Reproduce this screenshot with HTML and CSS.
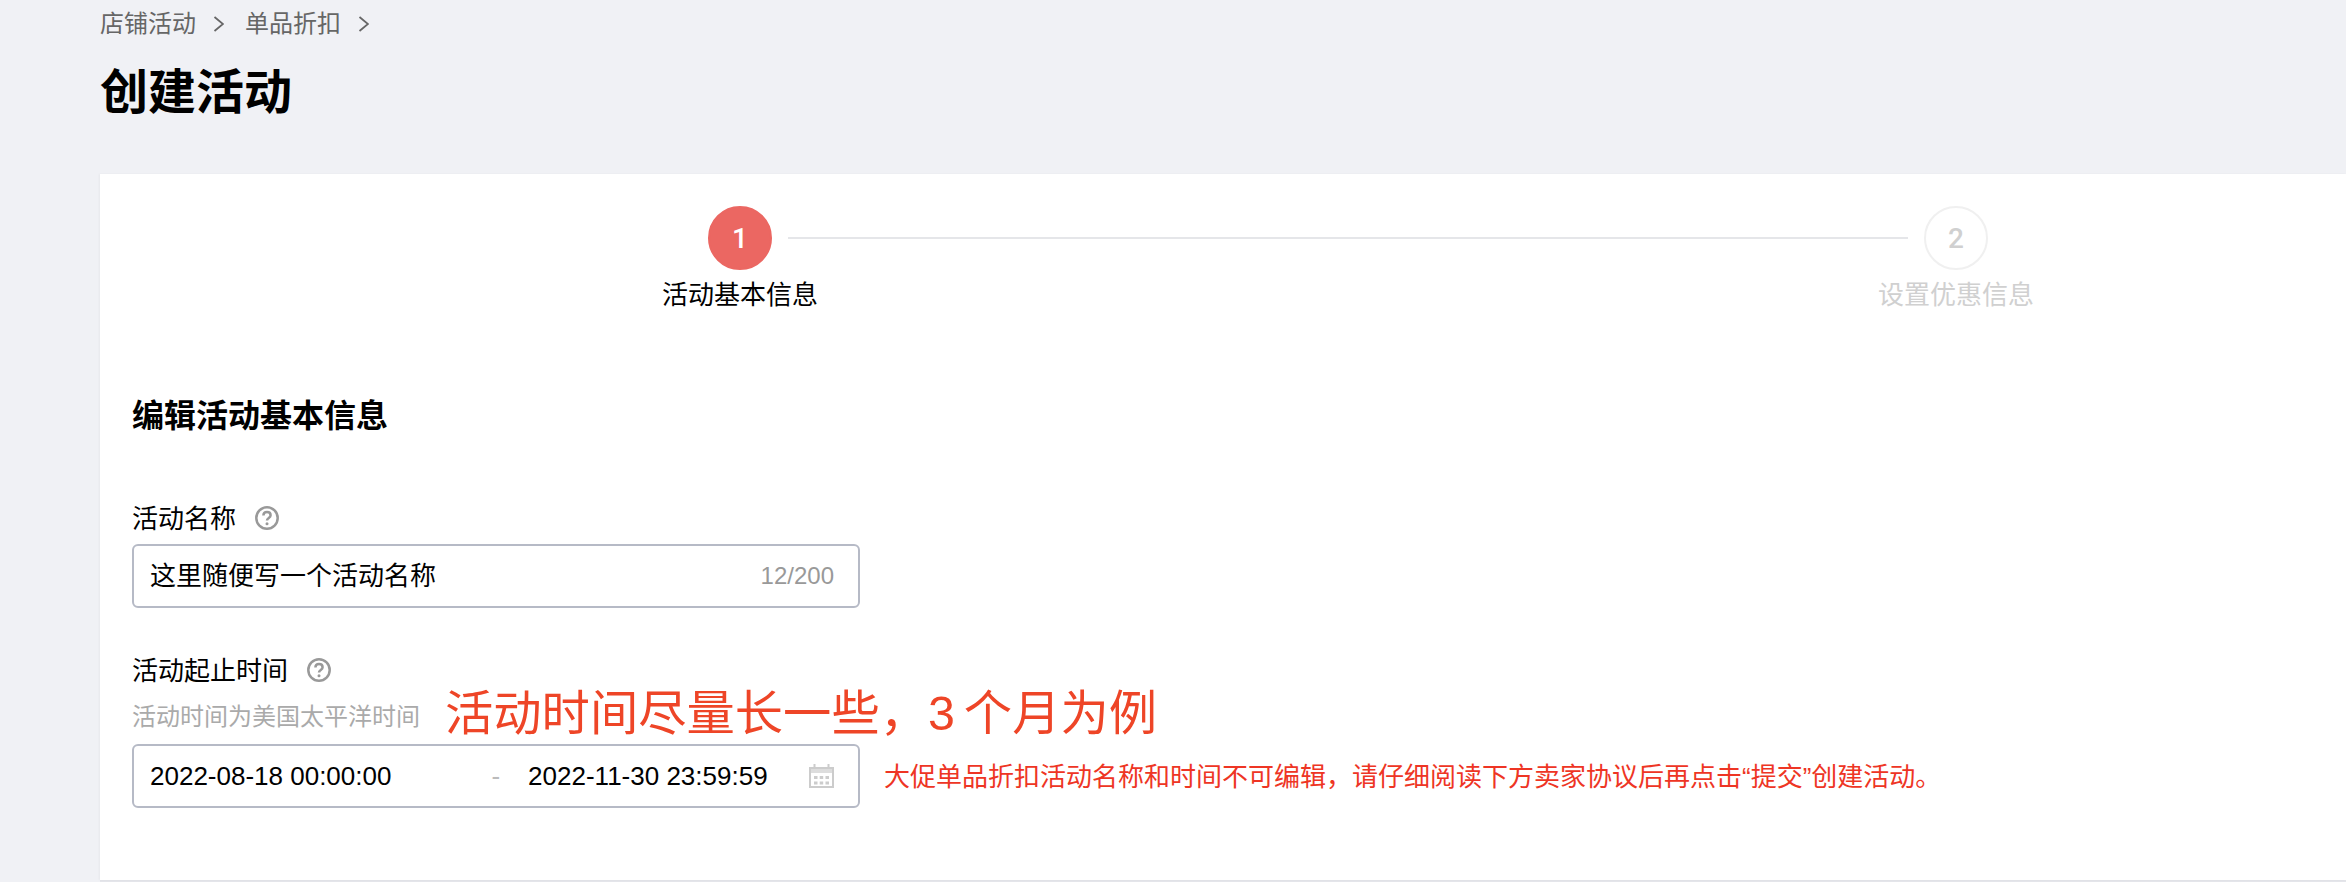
FILE: index.html
```html
<!DOCTYPE html>
<html lang="zh-CN">

<head>
  <meta charset="UTF-8" />
  <title>创建活动</title>
  <link rel="stylesheet" href="styles.css">
</head>

<body>
  <div class="page-head">
    <div class="breadcrumb">
      <span>店铺活动</span>
      <svg class="crumb-arrow" viewBox="0 0 11 16"><path d="M1.500 1 10 8l-8.500 7" /></svg>
      <span>单品折扣</span>
      <svg class="crumb-arrow" viewBox="0 0 11 16"><path d="M1.500 1 10 8l-8.500 7" /></svg>
    </div>
    <h1>创建活动</h1>
  </div>

  <div class="card">
    <div class="steps">
      <div class="step active">
        <div class="step-num">1</div>
        <div class="step-label">活动基本信息</div>
      </div>
      <div class="step-line"></div>
      <div class="step">
        <div class="step-num">2</div>
        <div class="step-label">设置优惠信息</div>
      </div>
    </div>

    <h2>编辑活动基本信息</h2>

    <div class="field-label first">
      <span>活动名称</span>
      <svg class="help" viewBox="0 0 24 24">
        <circle cx="12" cy="12" r="10.700" />
        <path d="M8.400 9.600c0-2.200 1.600-3.500 3.600-3.500s3.600 1.300 3.600 3.200c0 2.700-3.600 2.600-3.600 5.200" />
        <circle class="dot" cx="12" cy="17.800" r="1.500" />
      </svg>
    </div>
    <div class="input">
      <span class="input-text">这里随便写一个活动名称</span>
      <span class="count">12/200</span>
    </div>

    <div class="field-label second">
      <span>活动起止时间</span>
      <svg class="help" viewBox="0 0 24 24">
        <circle cx="12" cy="12" r="10.700" />
        <path d="M8.400 9.600c0-2.200 1.600-3.500 3.600-3.500s3.600 1.300 3.600 3.200c0 2.700-3.600 2.600-3.600 5.200" />
        <circle class="dot" cx="12" cy="17.800" r="1.500" />
      </svg>
    </div>
    <div class="hint-row">
      <span class="hint">活动时间为美国太平洋时间</span>
      <span class="big-note">活动时间尽量长一些，<span class="big-num">3</span>个月为例</span>
    </div>
    <div class="date-row">
      <div class="input">
        <span>2022-08-18 00:00:00</span>
        <span class="dash">-</span>
        <span>2022-11-30 23:59:59</span>
        <svg class="calendar" viewBox="0 0 25 24">
          <path class="cal-head" d="M1 4h23v5H1z" />
          <path class="cal-frame" d="M1 4h23v19H1z" />
          <path class="cal-tabs" d="M5.500 0v4M19.500 0v4" />
          <path class="cal-dots" d="M5 12h3.500v3H5zM10.700 12h3.500v3h-3.500zM16.500 12h3.500v3h-3.500zM5 17.500h3.500v3H5zM10.700 17.500h3.500v3h-3.500zM16.500 17.500h3.500v3h-3.500z" />
        </svg>
      </div>
      <span class="note">大促单品折扣活动名称和时间不可编辑，请仔细阅读下方卖家协议后再点击“提交”创建活动。</span>
    </div>
  </div>
</body>

</html>
```

FILE: styles.css
```css
* {
  margin: 0;
  padding: 0;
  box-sizing: border-box;
}

body {
  font-family: "Liberation Sans", "Noto Sans CJK SC", sans-serif;
  font-size: 26px;
  color: #000;
  background-color: #f0f1f5;
  height: 882px;
  overflow: hidden;
}

/* Header */
.page-head {
  padding-left: 100px;
}

.breadcrumb {
  display: flex;
  align-items: center;
  height: 48px;
  font-size: 24px;
  color: #666;
}

.breadcrumb span {
  padding-bottom: 5px;
}

.crumb-arrow {
  width: 11px;
  height: 16px;
  margin: 0 21px 0 17px;
  fill: none;
  stroke: #666;
  stroke-width: 1.8;
}

.page-head h1 {
  margin-top: 13px;
  margin-bottom: 49px;
  font-size: 48px;
  line-height: 64px;
  font-weight: bold;
}

/* Card */
.card {
  height: 706px;
  margin-left: 100px;
  padding: 32px 0 0 32px;
  background: #fff;
  box-shadow: -1px 0 2px rgba(0, 0, 0, 0.04), 0 2px 0 #e4e5ea;
}

.steps {
  display: flex;
  padding-left: 576px;
}

.step {
  display: flex;
  flex-direction: column;
  align-items: center;
  width: 64px;
  color: #d0d0d0;
}

.step-num {
  display: flex;
  justify-content: center;
  align-items: center;
  width: 64px;
  height: 64px;
  border: 2px solid #f0f0f0;
  border-radius: 50%;
  font-family: Roboto, sans-serif;
  font-size: 28px;
  font-weight: 500;
}

.step-label {
  margin-top: 7px;
  line-height: 36px;
  white-space: nowrap;
}

.step.active {
  color: #000;
}

.step.active .step-num {
  background-color: #eb6762;
  border-color: #eb6762;
  color: #fff;
}

.step-line {
  width: 1120px;
  height: 2px;
  margin: 31px 16px 0;
  background-color: #e5e6e9;
}

h2 {
  margin-top: 81px;
  font-size: 32px;
  line-height: 44px;
  font-weight: bold;
}

/* Form */
.field-label {
  display: flex;
  align-items: center;
  height: 36px;
}

.field-label span {
  padding-bottom: 3px;
}

.field-label.first {
  margin-top: 62px;
  margin-bottom: 8px;
}

.field-label.second {
  margin-top: 44px;
}

.help {
  width: 24px;
  height: 24px;
  margin-left: 19px;
  fill: none;
  stroke: #999;
  stroke-width: 2.5;
}

.help .dot {
  fill: #999;
  stroke: none;
}

.input {
  display: flex;
  align-items: center;
  justify-content: space-between;
  flex: none;
  width: 728px;
  height: 64px;
  padding: 0 24px 0 16px;
  border: 2px solid #b6bac6;
  border-radius: 6px;
}

.input-text {
  padding-bottom: 6px;
}

.count {
  font-size: 24px;
  color: #999;
}

.hint-row {
  display: flex;
  align-items: center;
  height: 56px;
}

.hint {
  padding-bottom: 4px;
  font-size: 24px;
  color: #aaa;
}

.big-note {
  margin: -14px 0 0 25px;
  font-size: 48.3px;
  color: #ee4527;
}

.big-num {
  padding-right: 9px;
}

.date-row {
  display: flex;
  align-items: center;
}

.date-row .input {
  justify-content: flex-start;
}

.dash {
  margin: 0 28px 0 100px;
  color: #bbb;
}

.calendar {
  width: 25px;
  height: 24px;
  margin-left: auto;
  fill: none;
}

.cal-frame,
.cal-tabs {
  stroke: #ccc;
  stroke-width: 2;
}

.cal-head {
  fill: #ddd;
}

.cal-dots {
  fill: #ccc;
}

.note {
  margin-left: 24px;
  padding-bottom: 3px;
  color: #ee3524;
  white-space: nowrap;
}
```
